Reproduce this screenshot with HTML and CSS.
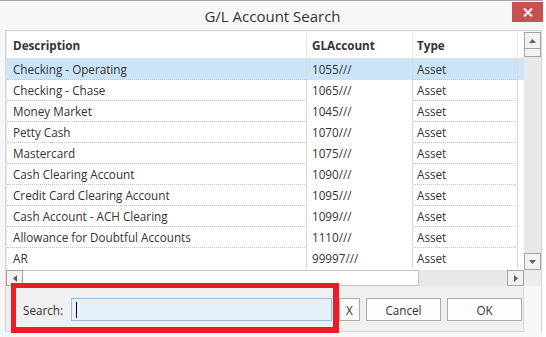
FILE: index.html
```html
<!DOCTYPE html>
<html>
<head>
<meta charset="utf-8">
<title>G/L Account Search</title>
<link rel="stylesheet" href="styles.css">
</head>
<body>
<div class="window">
  <div class="titlebar">
    <span></span>
    <div class="title">G/L Account Search</div>
    <button class="close" aria-label="Close">
      <svg width="10" height="9" viewBox="0 0 10 9"><path d="M1 0.5 L9 8.5 M9 0.5 L1 8.5" stroke="#fff" stroke-width="2"/></svg>
    </button>
  </div>
  <div class="frame">
    <div class="gridarea">
      <div class="table">
        <div class="row head">
          <div class="cell c1">Description</div>
          <div class="cell c2">GLAccount</div>
          <div class="cell c3">Type</div>
          <div class="cell c4"></div>
        </div>
        <div class="row sel"><div class="cell c1">Checking - Operating</div><div class="cell c2">1055///</div><div class="cell c3">Asset</div><div class="cell c4"></div></div>
        <div class="row"><div class="cell c1">Checking - Chase</div><div class="cell c2">1065///</div><div class="cell c3">Asset</div><div class="cell c4"></div></div>
        <div class="row"><div class="cell c1">Money Market</div><div class="cell c2">1045///</div><div class="cell c3">Asset</div><div class="cell c4"></div></div>
        <div class="row"><div class="cell c1">Petty Cash</div><div class="cell c2">1070///</div><div class="cell c3">Asset</div><div class="cell c4"></div></div>
        <div class="row"><div class="cell c1">Mastercard</div><div class="cell c2">1075///</div><div class="cell c3">Asset</div><div class="cell c4"></div></div>
        <div class="row"><div class="cell c1">Cash Clearing Account</div><div class="cell c2">1090///</div><div class="cell c3">Asset</div><div class="cell c4"></div></div>
        <div class="row"><div class="cell c1">Credit Card Clearing Account</div><div class="cell c2">1095///</div><div class="cell c3">Asset</div><div class="cell c4"></div></div>
        <div class="row"><div class="cell c1">Cash Account - ACH Clearing</div><div class="cell c2">1099///</div><div class="cell c3">Asset</div><div class="cell c4"></div></div>
        <div class="row"><div class="cell c1">Allowance for Doubtful Accounts</div><div class="cell c2">1110///</div><div class="cell c3">Asset</div><div class="cell c4"></div></div>
        <div class="row last"><div class="cell c1">AR</div><div class="cell c2">99997///</div><div class="cell c3">Asset</div><div class="cell c4"></div></div>
      </div>
      <div class="vscroll">
        <div class="sbtn"><svg width="7" height="4" viewBox="0 0 7 4"><path d="M0 4 L3.5 0 L7 4 Z" fill="#606060"/></svg></div>
        <div class="vthumb"></div>
        <div class="vtrack"></div>
        <div class="sbtn"><svg width="7" height="4" viewBox="0 0 7 4"><path d="M0 0 L3.5 4 L7 0 Z" fill="#606060"/></svg></div>
      </div>
      <div class="hscroll">
        <div class="sbtn h"><svg width="4" height="7" viewBox="0 0 4 7"><path d="M4 0 L0 3.5 L4 7 Z" fill="#606060"/></svg></div>
        <div class="hthumb"></div>
        <div class="htrack"></div>
        <div class="sbtn h"><svg width="4" height="7" viewBox="0 0 4 7"><path d="M0 0 L4 3.5 L0 7 Z" fill="#606060"/></svg></div>
      </div>
      <div class="corner"></div>
    </div>
    <div class="panel">
      <span class="label">Search:</span>
      <div class="input"><span class="caret"></span></div>
      <button class="btn xbtn">X</button>
      <button class="btn wide">Cancel</button>
      <button class="btn wide">OK</button>
    </div>
  </div>
  <div class="highlight-box"></div>
</div>
</body>
</html>
```

FILE: styles.css
```css
* { box-sizing: border-box; }
html, body { margin: 0; padding: 0; }
body {
  width: 546px;
  height: 337px;
  background: #ffffff;
  font-family: "Open Sans", "Noto Sans", sans-serif;
  color: #333;
  overflow: hidden;
}
.window {
  position: relative;
  width: 543px;
  height: 337px;
  background: #f7f7f7;
  border-top: 1px solid #a9a9a9;
  display: flex;
  flex-direction: column;
}
.titlebar {
  height: 29px;
  display: grid;
  grid-template-columns: 1fr auto 1fr;
  align-items: start;
}
.title {
  font-size: 15px;
  line-height: 30px;
  color: #333;
  padding-left: 2px;
}
.close {
  justify-self: end;
  width: 31px;
  height: 20px;
  margin-top: 1px;
  border: 0;
  padding: 0;
  background: #c75050;
  display: flex;
  align-items: center;
  justify-content: center;
}
.frame {
  margin-left: 5px;
  width: 537px;
  height: 302px;
  border: 1px solid #d6d6d6;
  border-bottom: 0;
  display: flex;
  flex-direction: column;
}
.gridarea {
  display: grid;
  grid-template-columns: 518px 17px;
  grid-template-rows: 238px 16px;
  padding-top: 1px;
}
.table {
  background: #fff;
  border-left: 1px solid #e4e4e4;
  font-size: 11.7px;
}
.row {
  display: grid;
  grid-template-columns: 300px 106px 105px 6px;
  height: 21px;
}
.row.head {
  height: 27px;
  font-weight: 700;
  border-bottom: 1px solid #e2e2e2;
}
.row.sel { background: #cce4f7; }
.cell {
  border-right: 1px solid #d9d9d9;
  border-bottom: 1px dotted #c6c6c6;
  padding-left: 6px;
  padding-top: 1px;
  line-height: 19px;
  white-space: nowrap;
  overflow: hidden;
}
.head .cell { border-bottom: 0; padding-top: 1px; line-height: 25px; border-right-color: #e8e8e8; }
.cell.c2 { border-bottom-color: transparent; padding-left: 5px; }
.cell.c3 { padding-left: 4px; }
.cell.c4 { border-right: 0; border-bottom-color: transparent; }
.row.last .cell { border-bottom-color: transparent; }
.vscroll {
  background: #e8e8e8;
  display: flex;
  flex-direction: column;
}
.sbtn {
  width: 17px;
  height: 17px;
  border: 1px solid #a4a4a4;
  background: #f2f2f2;
  display: flex;
  align-items: center;
  justify-content: center;
}
.sbtn.h { width: 17px; height: 16px; }
.vthumb {
  height: 8px;
  border: 1px solid #a4a4a4;
  border-top: 0;
  background: #f2f2f2;
}
.vtrack { flex: 1; }
.hscroll {
  background: #e8e8e8;
  display: flex;
  height: 16px;
}
.hthumb {
  width: 396px;
  background: #fff;
  border: 1px solid #c4c4c4;
  border-left: 0;
}
.htrack { flex: 1; }
.corner { background: #ececec; }
.panel {
  width: 518px;
  height: 46px;
  background: #f0f0f0;
  border-right: 1px solid #d6d6d6;
  border-bottom: 1px solid #d6d6d6;
  display: flex;
  align-items: center;
  padding-left: 17px;
  padding-top: 2px;
  font-size: 11.7px;
}
.label { width: 48px; color: #333; }
.input {
  width: 261px;
  height: 23px;
  background: #e6f2fb;
  border: 1px solid #99bedb;
  display: flex;
  align-items: center;
  padding-left: 4px;
}
.caret {
  width: 1px;
  height: 16px;
  background: #000;
}
.btn {
  height: 23px;
  border: 1px solid #acacac;
  background: #fdfdfd;
  font-family: "Open Sans", "Noto Sans", sans-serif;
  font-size: 11.7px;
  color: #333;
  padding: 0;
}
.xbtn { width: 21px; margin-left: 7px; }
.wide { width: 75px; margin-left: 6px; }
.highlight-box {
  position: absolute;
  left: 11px;
  top: 282px;
  width: 328px;
  height: 50px;
  border: 5px solid #ec1c24;
  border-right-width: 6px;
  border-bottom-width: 6px;
}
```
